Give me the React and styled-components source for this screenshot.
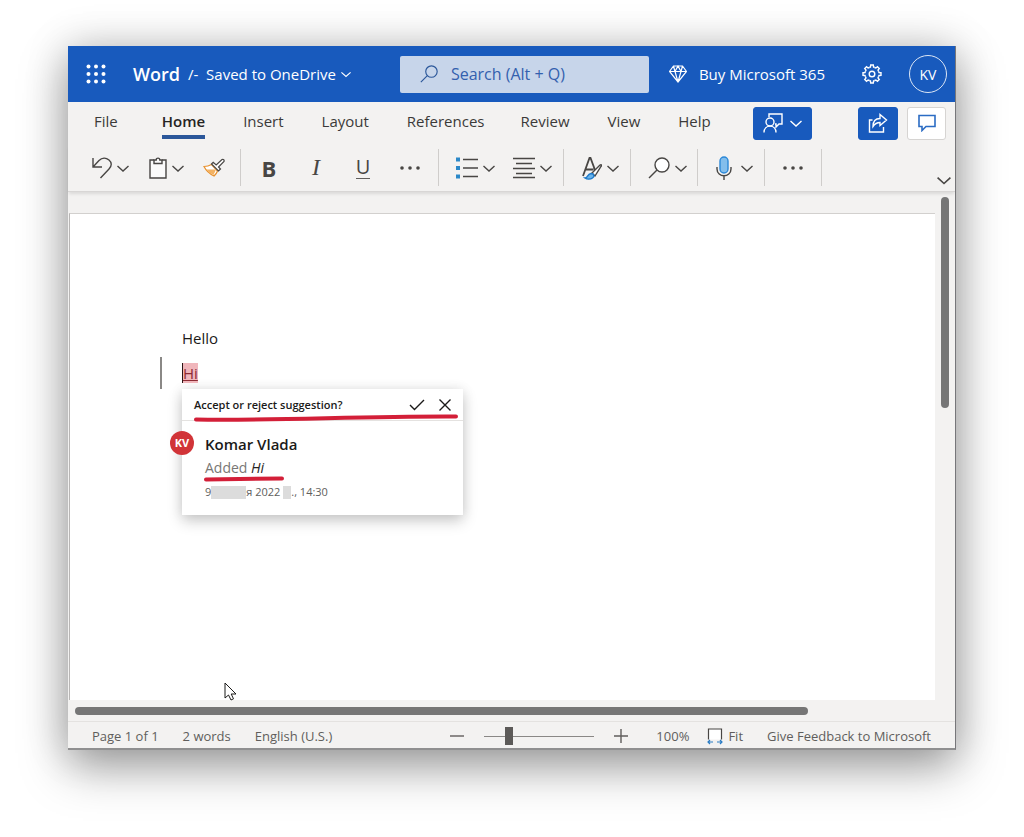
import styled, { createGlobalStyle } from "styled-components";

const GlobalStyle = createGlobalStyle`
  * {
    box-sizing: border-box;
  }
  body {
    margin: 0;
    background: #ffffff;
    font-family: "Open Sans", "Noto Sans", sans-serif;
    color: #3b3a39;
  }
  button,
  input {
    font-family: inherit;
  }
`;

const Desktop = styled.div`
  min-height: 100vh;
  padding: 46px 68px 87px;
  display: flex;
`;

const Window = styled.div`
  flex: 1;
  min-width: 0;
  display: flex;
  flex-direction: column;
  background: #f3f2f1;
  border-right: 1px solid #77777a;
  border-bottom: 2px solid #8f8f90;
  box-shadow: 0 0 40px rgba(0, 0, 0, 0.18), 0 18px 44px rgba(0, 0, 0, 0.34);
`;

const TitleBar = styled.header`
  height: 56px;
  padding: 0 8px 0 17px;
  display: flex;
  align-items: center;
  background: #185abd;
  color: #ffffff;
  font-size: 15px;
`;

const IconButton = styled.button`
  padding: 0;
  border: none;
  background: none;
  color: inherit;
  display: flex;
  align-items: center;
  justify-content: center;
  gap: ${p => p.$gap || 5}px;
  width: ${p => p.$width || 24}px;
  height: 32px;
  flex-shrink: 0;
`;

const AppName = styled.strong`
  margin-left: 27px;
  font-size: 18px;
  font-weight: 600;
`;

const DocName = styled.button`
  padding: 0;
  border: none;
  background: none;
  color: inherit;
  font-size: 15px;
  margin-left: 8px;
  display: flex;
  align-items: center;
  gap: 5px;
  white-space: nowrap;
`;

const Search = styled.label`
  margin-left: auto;
  width: 249px;
  height: 37px;
  padding-left: 20px;
  display: flex;
  align-items: center;
  gap: 13px;
  border-radius: 2px;
  background: #c7d5ea;
  color: #2b579a;
`;

const SearchInput = styled.input`
  flex: 1;
  min-width: 0;
  padding: 0;
  border: none;
  outline: none;
  background: none;
  font-size: 16px;
  color: #2b579a;
  &::placeholder {
    color: #3360ae;
    opacity: 1;
  }
`;

const BuyLink = styled.a`
  margin: 0 35px 0 20px;
  display: flex;
  align-items: center;
  gap: 12px;
  color: inherit;
  text-decoration: none;
  white-space: nowrap;
`;

const Account = styled.button`
  margin-left: 25px;
  width: 38px;
  height: 38px;
  flex-shrink: 0;
  padding: 0;
  border: 1px solid #dce6f5;
  border-radius: 50%;
  background: none;
  color: #ffffff;
  font-size: 14px;
`;

const TabBar = styled.nav`
  height: 42px;
  padding: 0 9px 0 26px;
  display: flex;
  align-items: center;
`;

const Tab = styled.button`
  height: 32px;
  padding: 0;
  margin-right: ${p => p.$gap}px;
  border: none;
  border-bottom: 4px solid ${p => (p.$active ? "#2b579a" : "transparent")};
  background: none;
  font-size: 15px;
  font-weight: ${p => (p.$active ? 600 : 400)};
  color: ${p => (p.$active ? "#252423" : "#3b3a39")};
`;

const RibbonButton = styled.button`
  width: ${p => p.$width}px;
  height: 33px;
  padding: 0;
  margin-left: ${p => p.$push || "0"};
  display: flex;
  align-items: center;
  justify-content: center;
  gap: 7px;
  border: 1px solid ${p => (p.$light ? "#d6d4d2" : "#185abd")};
  border-radius: 3px;
  background: ${p => (p.$light ? "#ffffff" : "#185abd")};
  color: ${p => (p.$light ? "#2b6cc4" : "#ffffff")};
`;

const Toolbar = styled.div`
  height: 48px;
  padding: 0 4px 0 20px;
  display: flex;
  align-items: center;
  border-bottom: 1px solid #d8d6d5;
  box-shadow: 0 3px 3px -1px rgba(0, 0, 0, 0.1);
  color: #484644;
`;

const Group = styled.div`
  height: 37px;
  display: flex;
  align-items: center;
  gap: ${p => p.$gap || 0}px;
  padding: 0 ${p => p.$end || p.$pad}px 0 ${p => p.$pad}px;
  border-right: 1px solid #cfcdcb;
`;

const Collapse = styled.button`
  margin-left: auto;
  padding: 0 0 4px;
  align-self: flex-end;
  display: flex;
  border: none;
  background: none;
  color: #484644;
`;

const Canvas = styled.main`
  flex: 1;
  display: flex;
  padding: 21px 6px 0 1px;
  gap: 6px;
`;

const Sheet = styled.article`
  flex: 1;
  min-width: 0;
  padding: 111px 112px 0 90px;
  background: #ffffff;
  border-top: 1px solid #d2d0ce;
  border-left: 1px solid #b8b6b5;
  color: #1b1a19;
`;

const Paragraph = styled.p`
  margin: 0 0 4px;
  padding-left: 22px;
  line-height: 26px;
  font-size: 15px;
`;

const ChangedParagraph = styled(Paragraph)`
  line-height: 32px;
  border-left: 2px solid #8a8886;
  padding-left: 20px;
  margin: 6px 0 0;
`;

const Insertion = styled.ins`
  background: #f0b6bb;
  border-left: 1px solid #2a1516;
  color: #8d2a33;
  text-decoration: underline;
`;

const Card = styled.section`
  width: 281px;
  margin-left: 22px;
  background: #ffffff;
  box-shadow: 0 6px 14px rgba(0, 0, 0, 0.2), 0 0 12px rgba(0, 0, 0, 0.08);
`;

const CardHeader = styled.div`
  height: 32px;
  padding: 0 10px 0 12px;
  display: flex;
  align-items: center;
  border-bottom: 1px solid #e4e2e0;
  font-size: 11px;
  font-weight: 600;
  position: relative;
`;

const CardActions = styled.div`
  margin-left: auto;
  display: flex;
  gap: 12px;
`;

const CardBody = styled.div`
  padding: 10px 12px 10px 0;
  display: flex;
  gap: 11px;
  margin-left: -12px;
`;

const Avatar = styled.span`
  width: 24px;
  height: 24px;
  border-radius: 50%;
  background: #d13438;
  color: #ffffff;
  font-size: 11px;
  font-weight: 700;
  line-height: 24px;
  text-align: center;
`;

const Author = styled.h3`
  margin: 0;
  font-size: 15px;
  font-weight: 600;
  line-height: 26px;
`;

const Change = styled.p`
  margin: 0;
  font-size: 14px;
  line-height: 22px;
  color: #797775;
  position: relative;
  em {
    color: #252423;
  }
`;

const When = styled.p`
  margin: 0;
  font-size: 11px;
  line-height: 26px;
  display: flex;
  align-items: center;
  color: #605e5c;
  white-space: pre;
`;

const Redacted = styled.span`
  width: ${p => p.$width}px;
  height: 13px;
  background: #dcdcdc;
`;

/* red marker strokes lie over the card */
const Marker = styled.svg`
  position: absolute;
  left: ${p => p.$left}px;
  bottom: ${p => p.$bottom}px;
`;

const VerticalScroll = styled.div`
  width: 8px;
  margin-top: -16px;
`;

const VerticalThumb = styled.div`
  height: 42%;
  border-radius: 4px;
  background: #767676;
`;

const HorizontalScroll = styled.div`
  height: 21px;
  padding: 0 7px;
  display: flex;
  align-items: center;
`;

const HorizontalThumb = styled.div`
  width: 84%;
  height: 8px;
  border-radius: 4px;
  background: #767676;
`;

const StatusBar = styled.footer`
  height: 27px;
  padding: 2px 24px 0;
  display: flex;
  align-items: center;
  border-top: 1px solid #e4e2e0;
  font-size: 13px;
  color: #605e5c;
  white-space: nowrap;
`;

const StatusItem = styled.span`
  margin-right: 24px;
`;

const Zoom = styled.div`
  margin-left: auto;
  display: flex;
  align-items: center;
`;

const ZoomSlider = styled.input`
  appearance: none;
  width: 110px;
  height: 18px;
  margin: 0 20px;
  background: linear-gradient(#8a8886, #8a8886) center / 100% 1px no-repeat;
  &::-webkit-slider-thumb {
    appearance: none;
    width: 8px;
    height: 18px;
    background: #5c5a58;
  }
`;

const StatusButton = styled.button`
  padding: 0;
  border: none;
  background: none;
  display: flex;
  align-items: center;
  gap: 5px;
  font-size: 13px;
  color: inherit;
  margin-left: ${p => p.$gap || 0}px;
`;

const Cursor = styled.svg`
  position: absolute;
  left: 224px;
  top: 682px;
`;

const Icon = ({ w, h, children, stroke = 1.4 }) => (
  <svg
    width={w}
    height={h}
    viewBox={`0 0 ${w} ${h}`}
    fill="none"
    stroke="currentColor"
    strokeWidth={stroke}
    aria-hidden="true"
  >
    {children}
  </svg>
);

const Chevron = ({ size = 12 }) => (
  <svg
    width={size}
    height={size}
    viewBox="0 0 12 12"
    fill="none"
    stroke="currentColor"
    strokeWidth="1.4"
    aria-hidden="true"
  >
    <path d="M.5 4 6 9l5.500-5" />
  </svg>
);

const Dots = () => (
  <Icon w={22} h={6} stroke={0}>
    <g fill="currentColor">
      <circle cx="3" cy="3" r="1.8" />
      <circle cx="11" cy="3" r="1.8" />
      <circle cx="19" cy="3" r="1.8" />
    </g>
  </Icon>
);

const Waffle = () => (
  <Icon w={20} h={20} stroke={0}>
    {[2.5, 10, 17.5].map(y =>
      [2.5, 10, 17.5].map(x => (
        <circle key={`${x}-${y}`} cx={x} cy={y} r="2" fill="currentColor" />
      ))
    )}
  </Icon>
);

const Magnifier = ({ size, fill = "none" }) => (
  <svg
    width={size}
    height={size}
    viewBox="0 0 22 22"
    fill={fill}
    stroke="currentColor"
    strokeWidth="1.400"
    aria-hidden="true"
  >
    <circle cx="14" cy="8" r="7" />
    <path d="M9 13 1 21" />
  </svg>
);

const Diamond = () => (
  <Icon w={18} h={18} stroke={1.2}>
    <path d="M4.500 1h9L17.500 6.500 9 17 .5 6.500ZM.5 6.500h17M4.500 1l1.500 5.500L9 17l3-10.500L13.500 1M6 6.500 9 1l3 5.500" />
  </Icon>
);

const teeth = [0, 45, 90, 135, 180, 225, 270, 315];

const Gear = () => (
  <Icon w={20} h={20} stroke={1.4}>
    <circle cx="10" cy="10" r="2.800" />
    {teeth.map(a => (
      <path
        key={a}
        transform={`rotate(${a} 10 10)`}
        d="M7.300 3.500 8.500 3 8.700 1h2.600L11.500 3l1.200.5"
      />
    ))}
  </Icon>
);

const Undo = () => (
  <Icon w={20} h={22}>
    <path d="M1 1v9h9M1 10 7 3.500C10 .5 14 .5 17 3s3 6 0 9L8.500 21" />
  </Icon>
);

const Clipboard = () => (
  <Icon w={18} h={22}>
    <path d="M5 3H1v18h16V3h-4" />
    <path d="M2 4h14v16H2z" fill="#fafafa" stroke="none" />
    <path d="M5 6.500V3h2.200c0-2.500 3.600-2.500 3.600 0H13v3.500Z" fill="#fafafa" />
  </Icon>
);

const Painter = () => (
  <Icon w={22} h={20} stroke={1.2}>
    <path
      d="M8.500 6.500C6 8 3.500 8.500 1 8.500c2 4 6 7.500 10 9.500 1.500-1.500 3-3 3.500-5Z"
      fill="#ffffff"
      stroke="#e8912d"
    />
    <path d="M3.500 11.500h9.500L10.500 17C7.500 15.500 5 13.500 3.500 11.500Z" fill="#f3b262" stroke="none" />
    <path
      d="m8.500 6 1.700-1.700 3 2.700L19 1.500C20.500 1 21.500 2 21 3.500l-5.500 5.500 2 2-2 2Z"
      fill="#ffffff"
    />
  </Icon>
);

const Bold = styled.b`
  font-size: 22px;
`;

const Italic = styled.i`
  font-family: "Liberation Serif", serif;
  font-size: 24px;
`;

const Underline = styled.span`
  font-size: 20px;
  line-height: 22px;
  border-bottom: 1px solid #605e5c;
`;

const Bullets = () => (
  <Icon w={22} h={22}>
    <path d="M7 2.500h15M7 11h15M7 19.500h15" />
    <path d="M0 2.500h4M0 11h4M0 19.500h4" stroke="#2b88c8" strokeWidth="4" />
  </Icon>
);

const Center = () => (
  <Icon w={22} h={22}>
    <path d="M0 1.500h22M3 6.500h16M0 11.500h22M3 16.500h16M0 20.500h22" />
  </Icon>
);

const Styles = () => (
  <Icon w={20} h={24}>
    <path d="M1 20 7.500 2h1L13 14M3.500 13.500h8" strokeWidth="1.800" />
    <path d="M10 17 18 9c1.500-1 2 0 1 1.500L13 20Z" fill="#ffffff" />
    <path
      d="M3 22c3 0 2-4 6-4.500 3 0 4 3 1.500 4.500C8.500 23.500 5 23.500 3 22Z"
      fill="#69b4ec"
      stroke="#1e79c8"
    />
  </Icon>
);

const Mic = () => (
  <Icon w={16} h={24}>
    <rect x="4" y="1" width="8" height="16" rx="4" fill="#83beec" stroke="#2b88d8" />
    <path d="M1 11v2c0 9 14 9 14 0v-2M8 20v4" />
  </Icon>
);

const PersonChat = () => (
  <Icon w={20} h={20}>
    <path d="M6 4V1h13v10h-3l-3 3v-3h-1" />
    <circle cx="7" cy="9" r="4" />
    <path d="M1 19.500c0-8.500 12-8.500 12 0" />
  </Icon>
);

const Share = () => (
  <Icon w={20} h={20}>
    <path d="M4.500 7H1.500v12h14v-5" />
    <path d="M5 13.500C5 8 8 5.500 12 5.500V1.500l6.500 5.500L12 12.500V9.500c-3 0-5 1-7 4Z" />
  </Icon>
);

const Comment = () => (
  <Icon w={18} h={18} stroke={1.6}>
    <path d="M1 1.500h16v11H8L4 16.500v-4H1Z" />
  </Icon>
);

const tabs = [
  ["File", 44],
  ["Home", 38],
  ["Insert", 38],
  ["Layout", 38],
  ["References", 36],
  ["Review", 38],
  ["View", 38],
  ["Help", 42]
];

const App = () => (
  <>
    <GlobalStyle />
    <Desktop>
      <Window>
        <TitleBar>
          <IconButton $width={21} aria-label="App launcher">
            <Waffle />
          </IconButton>
          <AppName>Word</AppName>
          <DocName>
            <span>/-&nbsp; Saved to OneDrive</span>
            <Chevron size={10} />
          </DocName>
          <Search>
            <Magnifier size={18} />
            <SearchInput aria-label="Search" placeholder="Search (Alt + Q)" />
          </Search>
          <BuyLink href="#buy">
            <Diamond />
            Buy Microsoft 365
          </BuyLink>
          <IconButton aria-label="Settings">
            <Gear />
          </IconButton>
          <Account>KV</Account>
        </TitleBar>

        <TabBar>
          {tabs.map(([name, gap]) => (
            <Tab key={name} $gap={gap} $active={name === "Home"}>
              {name}
            </Tab>
          ))}
          <RibbonButton $width={59} aria-label="Editing mode">
            <PersonChat />
            <Chevron />
          </RibbonButton>
          <RibbonButton $width={40} $push="auto" aria-label="Share">
            <Share />
          </RibbonButton>
          <RibbonButton $width={39} $push="9px" $light aria-label="Comments">
            <Comment />
          </RibbonButton>
        </TabBar>

        <Toolbar>
          <Group $pad={2} $end={14} $gap={16}>
            <IconButton $width={40} aria-label="Undo">
              <Undo />
              <Chevron />
            </IconButton>
            <IconButton $width={40} aria-label="Paste">
              <Clipboard />
              <Chevron />
            </IconButton>
            <IconButton aria-label="Format painter">
              <Painter />
            </IconButton>
          </Group>
          <Group $pad={16} $gap={23}>
            <IconButton aria-label="Bold">
              <Bold>B</Bold>
            </IconButton>
            <IconButton aria-label="Italic">
              <Italic>I</Italic>
            </IconButton>
            <IconButton aria-label="Underline">
              <Underline>U</Underline>
            </IconButton>
            <IconButton aria-label="More font options">
              <Dots />
            </IconButton>
          </Group>
          <Group $pad={16} $end={10} $gap={16}>
            <IconButton $width={41} aria-label="Bullets">
              <Bullets />
              <Chevron />
            </IconButton>
            <IconButton $width={41} aria-label="Alignment">
              <Center />
              <Chevron />
            </IconButton>
          </Group>
          <Group $pad={16} $end={10}>
            <IconButton $width={40} aria-label="Styles">
              <Styles />
              <Chevron />
            </IconButton>
          </Group>
          <Group $pad={16} $end={10}>
            <IconButton $width={40} aria-label="Find">
              <Magnifier size={22} fill="#ffffff" />
              <Chevron />
            </IconButton>
          </Group>
          <Group $pad={16} $end={10}>
            <IconButton $width={40} $gap={9} aria-label="Dictate">
              <Mic />
              <Chevron />
            </IconButton>
          </Group>
          <Group $pad={16}>
            <IconButton aria-label="More commands">
              <Dots />
            </IconButton>
          </Group>
          <Collapse aria-label="Collapse ribbon">
            <Chevron size={14} />
          </Collapse>
        </Toolbar>

        <Canvas>
          <Sheet>
            <Paragraph>Hello</Paragraph>
            <ChangedParagraph>
              <Insertion>Hi</Insertion>
            </ChangedParagraph>
            <Card>
              <CardHeader>
                Accept or reject suggestion?
                <CardActions>
                  <IconButton $width={16} aria-label="Accept">
                    <Icon w={16} h={12}>
                      <path d="m1 6 4.500 4.500L15 1" />
                    </Icon>
                  </IconButton>
                  <IconButton $width={16} aria-label="Reject">
                    <Icon w={12} h={12}>
                      <path d="m.5.5 11 11M11.500.5l-11 11" />
                    </Icon>
                  </IconButton>
                </CardActions>
                <Marker $left={10} $bottom={-2} width="268" height="8" aria-hidden="true">
                  <path
                    d="M4 5.500C80 7 170 2 264 2.500"
                    stroke="#d31f38"
                    strokeWidth="4"
                    strokeLinecap="round"
                    fill="none"
                  />
                </Marker>
              </CardHeader>
              <CardBody>
                <Avatar>KV</Avatar>
                <div>
                  <Author>Komar Vlada</Author>
                  <Change>
                    Added <em>Hi</em>
                    <Marker $left={-2} $bottom={-3} width="82" height="6" aria-hidden="true">
                      <path
                        d="M3 3.500 79 2.500"
                        stroke="#d31f38"
                        strokeWidth="4"
                        strokeLinecap="round"
                      />
                    </Marker>
                  </Change>
                  <When>
                    9<Redacted $width={35} />я 2022 <Redacted $width={8} />
                    ., 14:30
                  </When>
                </div>
              </CardBody>
            </Card>
          </Sheet>
          <VerticalScroll>
            <VerticalThumb />
          </VerticalScroll>
        </Canvas>
        <HorizontalScroll>
          <HorizontalThumb />
        </HorizontalScroll>

        <StatusBar>
          <StatusItem>Page 1 of 1</StatusItem>
          <StatusItem>2 words</StatusItem>
          <StatusItem>English (U.S.)</StatusItem>
          <Zoom>
            <StatusButton aria-label="Zoom out">
              <Icon w={14} h={14}>
                <path d="M0 7h14" />
              </Icon>
            </StatusButton>
            <ZoomSlider
              type="range"
              aria-label="Zoom"
              min="10"
              max="500"
              defaultValue="110"
            />
            <StatusButton aria-label="Zoom in">
              <Icon w={14} h={14}>
                <path d="M0 7h14M7 0v14" />
              </Icon>
            </StatusButton>
            <StatusButton $gap={28}>100%</StatusButton>
            <StatusButton $gap={18}>
              <Icon w={16} h={17} stroke={1.2}>
                <path d="M1.500 11.500V1h13v10.500" fill="#ffffff" stroke="#484644" />
                <path
                  d="M1 14h5M10 14h5M3 12 1 14l2 2M13 12l2 2-2 2"
                  stroke="#2b7cc4"
                />
              </Icon>
              Fit
            </StatusButton>
            <StatusButton $gap={24}>Give Feedback to Microsoft</StatusButton>
          </Zoom>
        </StatusBar>
      </Window>
    </Desktop>
    <Cursor width="13" height="19" viewBox="0 0 13 19" aria-hidden="true">
      <path
        d="M1 1v15l3.500-3 2.500 5 2.500-1.200L7.200 12H12Z"
        fill="#ffffff"
        stroke="#1b1a19"
      />
    </Cursor>
  </>
);

export default App;
